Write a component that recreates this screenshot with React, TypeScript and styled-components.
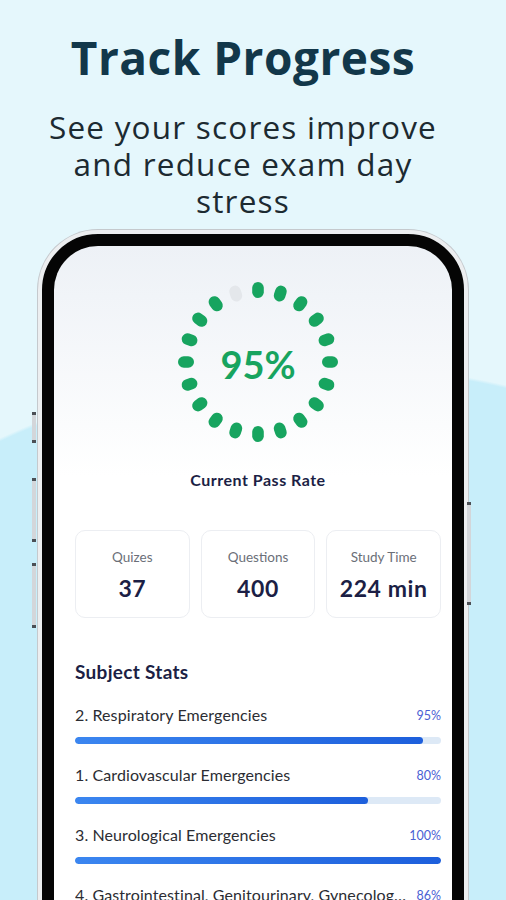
import styled, { createGlobalStyle } from 'styled-components';

const GlobalStyle = createGlobalStyle`
  html, body {
    margin: 0;
    padding: 0;
  }
  body {
    width: 506px;
    height: 900px;
    overflow: hidden;
    font-family: Lato, "Open Sans", sans-serif;
  }
`;

const stats = [
  { label: 'Quizes', value: '37' },
  { label: 'Questions', value: '400' },
  { label: 'Study Time', value: '224 min' },
];

const subjects = [
  { name: '2. Respiratory Emergencies', pct: 95 },
  { name: '1. Cardiovascular Emergencies', pct: 80 },
  { name: '3. Neurological Emergencies', pct: 100 },
  { name: '4. Gastrointestinal, Genitourinary, Gynecological Emergencies', pct: 86 },
];

const DOTS = 20;

function PassRing({ value }: { value: number }) {
  const filled = Math.round((value / 100) * DOTS);
  return (
    <Ring>
      <svg width="170" height="170" viewBox="0 0 170 170">
        {Array.from({ length: DOTS }).map((_, i) => (
          <rect
            key={i}
            x="-5.8"
            y="-80"
            width="11.6"
            height="16"
            rx="5.8"
            fill={i < filled ? '#17a45f' : '#e4e7eb'}
            transform={`translate(85 85) rotate(${i * 18})`}
          />
        ))}
      </svg>
      <RingValue>{value}%</RingValue>
    </Ring>
  );
}

export default function App() {
  return (
    <Page>
      <GlobalStyle />
      <Header>
        <Title>Track Progress</Title>
        <Subtitle>
          <Line>See your scores improve</Line>
          <Line>and reduce exam day</Line>
          <Line>stress</Line>
        </Subtitle>
      </Header>

      <Phone>
        <SideButton $side="left" $top={178} $height={31} />
        <SideButton $side="left" $top={244} $height={64} />
        <SideButton $side="left" $top={329} $height={65} />
        <SideButton $side="right" $top={268} $height={103} />

        <Screen>
          <PassRing value={95} />
          <RingCaption>Current Pass Rate</RingCaption>

          <Cards>
            {stats.map((s) => (
              <Card key={s.label}>
                <CardLabel>{s.label}</CardLabel>
                <CardValue>{s.value}</CardValue>
              </Card>
            ))}
          </Cards>

          <SectionTitle>Subject Stats</SectionTitle>
          <SubjectList>
            {subjects.map((s) => (
              <Subject key={s.name}>
                <SubjectHead>
                  <SubjectName>{s.name}</SubjectName>
                  <SubjectPct>{s.pct}%</SubjectPct>
                </SubjectHead>
                <Track>
                  <Fill $pct={s.pct} />
                </Track>
              </Subject>
            ))}
          </SubjectList>
        </Screen>
      </Phone>
    </Page>
  );
}

const Page = styled.div`
  width: 506px;
  height: 900px;
  overflow: hidden;
  background:
    radial-gradient(ellipse 800px 820px at 330px 1185px, #c8eefa 99.6%, rgba(200, 238, 250, 0) 100%),
    #e5f7fc;
`;

const Header = styled.header`
  padding: 30px 20px 0 0;
  text-align: center;
`;

const Title = styled.h1`
  margin: 0;
  font-family: "Open Sans", sans-serif;
  font-weight: 700;
  font-size: 46px;
  line-height: 54px;
  letter-spacing: 0.5px;
  color: #12374a;
`;

const Subtitle = styled.div`
  margin-top: 24px;
  display: flex;
  flex-direction: column;
  align-items: center;
  font-family: "Open Sans", sans-serif;
  font-weight: 400;
  font-size: 31.5px;
  letter-spacing: 1.2px;
  color: #1c2a31;
`;

const Line = styled.span`
  display: block;
  height: 37px;
  line-height: 37px;
  white-space: nowrap;
`;

const Phone = styled.div`
  position: relative;
  box-sizing: border-box;
  width: 430px;
  height: 800px;
  margin: 11px 0 0 38px;
  padding: 12px;
  background: #050505;
  border: 4px solid #eceef0;
  border-radius: 60px;
  box-shadow: 0 0 0 1px #c5c9cd;
`;

const SideButton = styled.div<{ $side: 'left' | 'right'; $top: number; $height: number }>`
  position: absolute;
  ${(p) => (p.$side === 'left' ? 'left: -10px;' : 'right: -7px;')}
  top: ${(p) => p.$top}px;
  width: 4px;
  height: ${(p) => p.$height}px;
  box-sizing: border-box;
  background: #d3d6da;
  border-top: 3px solid #4b4f55;
  border-bottom: 3px solid #4b4f55;
`;

const Screen = styled.div`
  height: 100%;
  box-sizing: border-box;
  padding: 31px 11px 0 21px;
  border-radius: 44px;
  background: linear-gradient(180deg, #edf1f6 0%, #ffffff 230px);
  display: flex;
  flex-direction: column;
  align-items: stretch;
`;

const Ring = styled.div`
  display: grid;
  place-items: center;
  align-self: center;
  width: 170px;
  height: 170px;
  > * {
    grid-area: 1 / 1;
  }
`;

const RingValue = styled.span`
  font-family: Lato, sans-serif;
  font-weight: 700;
  font-size: 38px;
  color: #17a45f;
  margin-top: 4px;
`;

const RingCaption = styled.div`
  margin-top: 23px;
  text-align: center;
  font-size: 16px;
  line-height: 20px;
  font-weight: 700;
  letter-spacing: 0.5px;
  color: #1c1f45;
`;

const Cards = styled.div`
  display: grid;
  grid-template-columns: repeat(3, 1fr);
  gap: 11px;
  margin-top: 40px;
`;

const Card = styled.div`
  height: 88px;
  box-sizing: border-box;
  padding-top: 17px;
  border: 1px solid #eceef2;
  border-radius: 10px;
  background: #fff;
  display: flex;
  flex-direction: column;
  align-items: center;
  gap: 8px;
`;

const CardLabel = styled.div`
  font-size: 13.5px;
  line-height: 18px;
  color: #6b6f78;
`;

const CardValue = styled.div`
  font-size: 23px;
  line-height: 28px;
  font-weight: 700;
  letter-spacing: 0.6px;
  color: #1c1f45;
`;

const SectionTitle = styled.h2`
  margin: 42px 0 0;
  font-size: 19px;
  line-height: 24px;
  font-weight: 700;
  letter-spacing: 0.3px;
  color: #1c1f45;
`;

const SubjectList = styled.div`
  display: flex;
  flex-direction: column;
  gap: 21px;
  margin-top: 21px;
`;

const Subject = styled.div`
  display: flex;
  flex-direction: column;
  gap: 12px;
`;

const SubjectHead = styled.div`
  display: flex;
  align-items: center;
  gap: 10px;
`;

const SubjectName = styled.span`
  flex: 1;
  min-width: 0;
  white-space: nowrap;
  overflow: hidden;
  text-overflow: ellipsis;
  font-size: 16px;
  line-height: 20px;
  letter-spacing: 0.1px;
  color: #2b2d33;
`;

const SubjectPct = styled.span`
  font-size: 12.5px;
  color: #4b60d3;
`;

const Track = styled.div`
  height: 7px;
  border-radius: 4px;
  background: #dde9f6;
  overflow: hidden;
`;

const Fill = styled.div<{ $pct: number }>`
  width: ${(p) => p.$pct}%;
  height: 100%;
  border-radius: 4px;
  background: linear-gradient(90deg, #3b86f0 0%, #1d5fdc 100%);
`;
